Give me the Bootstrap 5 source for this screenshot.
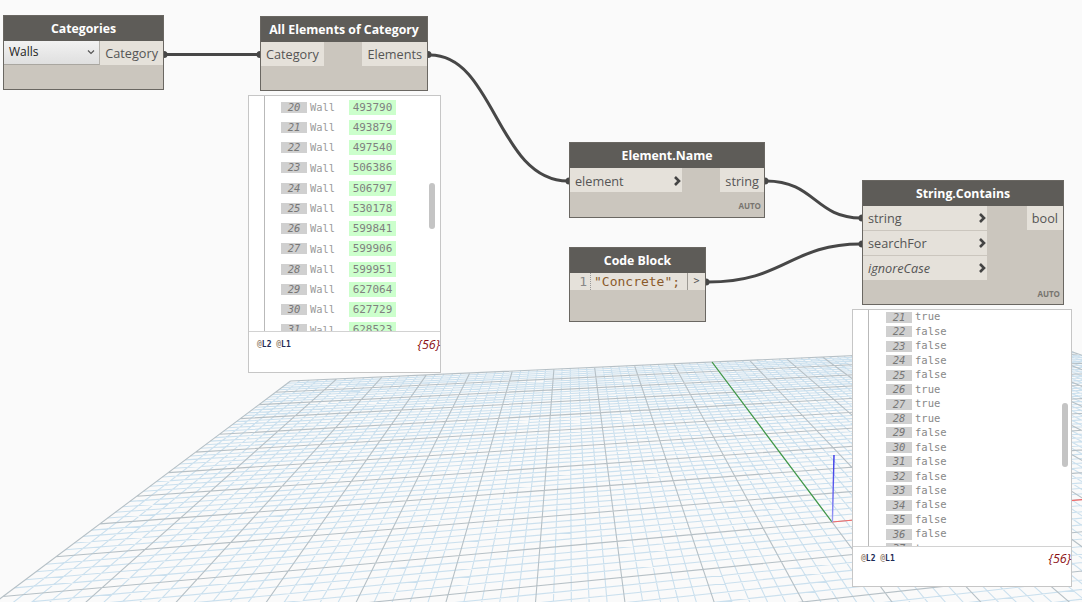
<!DOCTYPE html>
<html lang="en">
<head>
  <meta charset="UTF-8">
  <title>Dynamo graph</title>
  <link rel="stylesheet" href="https://cdn.jsdelivr.net/npm/bootstrap@5.3.0/dist/css/bootstrap.min.css">
  <style>
    html, body { margin: 0; height: 100%; overflow: hidden; background: #fafafa; }
    .canvas-area { width: 1082px; height: 602px; position: relative; overflow: hidden; font-family: "Open Sans", sans-serif; }
    .layer-svg { position: absolute; left: 0; top: 0; }
    .wires { z-index: 3; pointer-events: none; }

    .dyn-node { position: absolute; background: #cbc6be; border: 1px solid #6a6762; display: flex; flex-direction: column; z-index: 2; }
    .node-categories { left: 3px; top: 15px; width: 161px; height: 75px; }
    .node-allelems { left: 260px; top: 16px; width: 168px; height: 75px; }
    .node-elemname { left: 569px; top: 142px; width: 196px; height: 76px; }
    .node-code { left: 569px; top: 247px; width: 137px; height: 75px; }
    .node-contains { left: 862px; top: 180px; width: 202px; height: 125px; }

    .node-head { height: 25px; flex: none; background: #5e5c58; color: #fff; font-size: 12.3px; font-weight: 700; text-align: center; line-height: 25px; white-space: nowrap; }
    .node-ports { display: flex; justify-content: space-between; align-items: flex-start; }
    .port-col { display: flex; flex-direction: column; gap: 1px; }
    .port-row { height: 24px; line-height: 24px; background: #e5e1da; color: #555; font-size: 12.7px; padding: 0 5px; display: flex; align-items: center; justify-content: space-between; white-space: nowrap; }
    .port-in { width: 112px; }
    .port-wide { width: 124px; }
    .port-row svg { flex: none; margin-right: -5px; }
    .node-elemname .port-row { padding-top: 1px; }
    .auto-tag { margin-top: auto; align-self: flex-end; font-size: 8px; font-weight: 700; color: #77746f; line-height: 10px; padding: 0 3px 5px 0; }
    .node-elemname .auto-tag { padding-bottom: 6px; }

    .walls-select { width: 96px; height: 24px; background: linear-gradient(#f2f2f2, #dfdfdf); border-right: 1px solid #b5b2ac; border-bottom: 1px solid #a9a6a0; color: #222; font-size: 12px; padding: 0 4px 2px 5px; display: flex; align-items: center; justify-content: space-between; }

    .code-row { height: 17px; display: flex; background: #e5e1da; font-family: "DejaVu Sans Mono", monospace; font-size: 13px; line-height: 17px; }
    .code-num { width: 21px; color: #888; text-align: right; padding-right: 3px; border-right: 1px dotted #999; flex: none; }
    .code-str { flex: 1; color: #8a5a2b; padding-left: 3px; white-space: nowrap; }
    .code-out { width: 18px; flex: none; border-left: 1px solid #9d9a94; color: #555; text-align: center; font-size: 10px; line-height: 16px; }

    .preview-box { position: absolute; background: #fff; border: 1px solid #c6c6c6; z-index: 2; }
    .preview-a { left: 248px; top: 95px; width: 193px; height: 278px; }
    .preview-b { left: 852px; top: 309px; width: 220px; height: 278px; }
    .preview-list { height: 236px; overflow: hidden; position: relative; border-bottom: 1px solid #d2d2d2; }
    .preview-a .preview-list { padding: 1px 0 0 32px; }
    .preview-b .preview-list { height: 237px; padding: 0 0 0 33px; }
    .tree-rule { position: absolute; left: 15px; top: 0; bottom: 0; width: 1px; background: #b9b9b9; }
    .val-row { display: flex; align-items: center; font-family: "DejaVu Sans Mono", monospace; color: #888; white-space: nowrap; }
    .preview-a .val-row { height: 20.25px; }
    .preview-b .val-row { height: 14.47px; }
    .val-idx { width: 26px; height: 11px; line-height: 10px; background: #d0d0d0; color: #777; font-size: 10.5px; font-style: italic; text-align: center; flex: none; }
    .val-kind { width: 42px; padding: 1px 0 0 3px; font-size: 10.4px; color: #9a9a9a; flex: none; }
    .val-num { width: 47px; height: 15px; line-height: 15px; background: #ccffcc; color: #808080; font-size: 11px; text-align: center; flex: none; }
    .val-bool { padding-left: 3px; font-size: 10.5px; color: #888; }
    .fake-scroll { position: absolute; width: 6px; background: #c4c4c4; border-radius: 3px; }
    .preview-a .fake-scroll { left: 180px; top: 87px; height: 46px; }
    .preview-b .fake-scroll { left: 209px; top: 93px; height: 64px; }
    .preview-foot { display: flex; justify-content: space-between; align-items: flex-start; padding: 6px 0 0 8px; }
    .preview-b .preview-foot { padding-top: 5px; }
    .level-tags { font-family: "DejaVu Sans Mono", monospace; font-size: 8px; font-weight: 700; line-height: 14px; color: #1d2a55; }
    .level-tags i { font-style: normal; color: #9a8a78; }
    .count-tag { font-size: 12.5px; font-style: italic; line-height: 14px; color: #8b0f12; }
  </style>
</head>
<body>
  <div class="canvas-area">
    <!-- ground grid, filled by script -->
    <svg id="grid" class="layer-svg" width="1082" height="602"></svg>

    <!-- Categories -->
    <div class="dyn-node node-categories">
      <div class="node-head">Categories</div>
      <div class="node-ports">
        <div class="walls-select"><span>Walls</span>
          <svg width="8" height="6" viewBox="0 0 8 6"><path d="M1 1.5 4 4.5 7 1.5" fill="none" stroke="#555" stroke-width="1.2"/></svg>
        </div>
        <div class="port-row">Category</div>
      </div>
    </div>

    <!-- All Elements of Category -->
    <div class="dyn-node node-allelems">
      <div class="node-head">All Elements of Category</div>
      <div class="node-ports">
        <div class="port-row">Category</div>
        <div class="port-row">Elements</div>
      </div>
    </div>

    <!-- Element.Name -->
    <div class="dyn-node node-elemname">
      <div class="node-head">Element.Name</div>
      <div class="node-ports">
        <div class="port-row port-in">element
          <svg width="9" height="12" viewBox="0 0 9 12"><path d="M2 2 6 6 2 10" fill="none" stroke="#444" stroke-width="2.6"/></svg>
        </div>
        <div class="port-row">string</div>
      </div>
      <div class="auto-tag">AUTO</div>
    </div>

    <!-- Code Block -->
    <div class="dyn-node node-code">
      <div class="node-head">Code Block</div>
      <div class="code-row">
        <div class="code-num">1</div>
        <div class="code-str">"Concrete";</div>
        <div class="code-out">&gt;</div>
      </div>
    </div>

    <!-- String.Contains -->
    <div class="dyn-node node-contains">
      <div class="node-head">String.Contains</div>
      <div class="node-ports">
        <div class="port-col">
          <div class="port-row port-wide">string
            <svg width="9" height="12" viewBox="0 0 9 12"><path d="M2 2 6 6 2 10" fill="none" stroke="#444" stroke-width="2.6"/></svg>
          </div>
          <div class="port-row port-wide">searchFor
            <svg width="9" height="12" viewBox="0 0 9 12"><path d="M2 2 6 6 2 10" fill="none" stroke="#444" stroke-width="2.6"/></svg>
          </div>
          <div class="port-row port-wide"><em>ignoreCase</em>
            <svg width="9" height="12" viewBox="0 0 9 12"><path d="M2 2 6 6 2 10" fill="none" stroke="#444" stroke-width="2.6"/></svg>
          </div>
        </div>
        <div class="port-row">bool</div>
      </div>
      <div class="auto-tag">AUTO</div>
    </div>

    <!-- previews -->
    <div class="preview-box preview-a">
      <div class="preview-list" id="listA"><div class="tree-rule"></div></div>
      <div class="fake-scroll"></div>
      <div class="preview-foot">
        <div class="level-tags"><i>@</i>L2 <i>@</i>L1</div>
        <div class="count-tag">{56}</div>
      </div>
    </div>
    <div class="preview-box preview-b">
      <div class="preview-list" id="listB"><div class="tree-rule"></div></div>
      <div class="fake-scroll"></div>
      <div class="preview-foot">
        <div class="level-tags"><i>@</i>L2 <i>@</i>L1</div>
        <div class="count-tag">{56}</div>
      </div>
    </div>

    <!-- wires -->
    <svg class="layer-svg wires" width="1082" height="602">
      <g fill="none" stroke="#474747" stroke-width="3">
        <path d="M165 54.5H259"/>
        <path d="M430 55C495 55 497 181 568 181"/>
        <path d="M766 181C815 181 815 218 861 218"/>
        <path d="M708 282C785 282 790 244 861 244"/>
      </g>
      <g fill="#474747">
        <path d="M164 51v7a3.5 3.5 0 0 0 0-7Z"/>
        <path d="M428 51v7a3.5 3.5 0 0 0 0-7Z"/>
        <path d="M765 177.5v7a3.5 3.5 0 0 0 0-7Z"/>
        <path d="M706 278.5v7a3.5 3.5 0 0 0 0-7Z"/>
        <path d="M260 51v7a3.5 3.5 0 0 1 0-7Z"/>
        <path d="M569 177.5v7a3.5 3.5 0 0 1 0-7Z"/>
        <path d="M862 214.5v7a3.5 3.5 0 0 1 0-7Z"/>
        <path d="M862 240.5v7a3.5 3.5 0 0 1 0-7Z"/>
      </g>
    </svg>
  </div>

  <script src="https://cdn.jsdelivr.net/npm/bootstrap@5.3.0/dist/js/bootstrap.bundle.min.js"></script>
  <script>
    // values shown in the two watch lists
    const elems = [[20,493790],[21,493879],[22,497540],[23,506386],[24,506797],[25,530178],[26,599841],[27,599906],[28,599951],[29,627064],[30,627729],[31,628523]];
    document.getElementById('listA').insertAdjacentHTML('beforeend', elems.map(e =>
      `<div class="val-row"><span class="val-idx">${e[0]}</span><span class="val-kind">Wall</span><span class="val-num">${e[1]}</span></div>`).join(''));

    const trues = [21, 26, 27, 28, 37];
    let rowsB = '';
    for (let i = 21; i <= 37; i++) {
      rowsB += `<div class="val-row"><span class="val-idx">${i}</span><span class="val-bool">${trues.includes(i) ? 'true' : 'false'}</span></div>`;
    }
    document.getElementById('listB').insertAdjacentHTML('beforeend', rowsB);

    // ground plane: homography from grid units (u -10..10, v -10..10) fitted on four picked points
    function fitQuad(p0, p1, p2, p3) {
      // unit square (0,0),(1,0),(1,1),(0,1) to p0..p3
      const dx1 = p1[0]-p2[0], dx2 = p3[0]-p2[0], sx = p0[0]-p1[0]+p2[0]-p3[0];
      const dy1 = p1[1]-p2[1], dy2 = p3[1]-p2[1], sy = p0[1]-p1[1]+p2[1]-p3[1];
      const det = dx1*dy2-dx2*dy1;
      const g = (sx*dy2-dx2*sy)/det, h = (dx1*sy-sx*dy1)/det;
      const a = p1[0]-p0[0]+g*p1[0], b = p3[0]-p0[0]+h*p3[0], c = p0[0];
      const d = p1[1]-p0[1]+g*p1[1], e = p3[1]-p0[1]+h*p3[1], f = p0[1];
      return (s, t) => { const w = g*s+h*t+1; return [(a*s+b*t+c)/w, (d*s+e*t+f)/w]; };
    }
    // s = (u+10)/10, t = v/10
    const proj = fitQuad([3,596.5],[832,522],[712,362],[290.5,381]);
    const pt = (u, v) => proj((u+10)/10, v/10).map(n => n.toFixed(1)).join(' ');
    const vMin = -5, uMax = 10, div = 5;
    let minor = '', major = '';
    for (let i = -10*div; i <= uMax*div; i++) {
      const u = i/div, seg = `M${pt(u,vMin)}L${pt(u,10)}`;
      if (i % div === 0) major += seg; else minor += seg;
    }
    for (let i = vMin*div; i <= 10*div; i++) {
      const v = i/div, seg = `M${pt(-10,v)}L${pt(uMax,v)}`;
      if (i % div === 0) major += seg; else minor += seg;
    }
    document.getElementById('grid').innerHTML =
      `<defs><linearGradient id="zfade" gradientUnits="userSpaceOnUse" x1="832" y1="522" x2="834" y2="455"><stop offset="0" stop-color="#a0a0f5"/><stop offset=".35" stop-color="#6a6af0"/><stop offset="1" stop-color="#3333e6"/></linearGradient></defs>
       <path d="${minor}" fill="none" stroke="#cbe0ee" stroke-width="1.1"/>
       <path d="${major}" fill="none" stroke="#b6c0c6" stroke-width="1.1"/>
       <path d="M${pt(0,0)}L${pt(0,10)}" fill="none" stroke="#3f9a45" stroke-width="1.2"/>
       <path d="M${pt(0,0)}L${pt(10,0)}" fill="none" stroke="#f26a6a" stroke-width="1.2"/>
       <path d="M832.4 522L834 455" fill="none" stroke="url(#zfade)" stroke-width="1.4"/>`;
  </script>
</body>
</html>
